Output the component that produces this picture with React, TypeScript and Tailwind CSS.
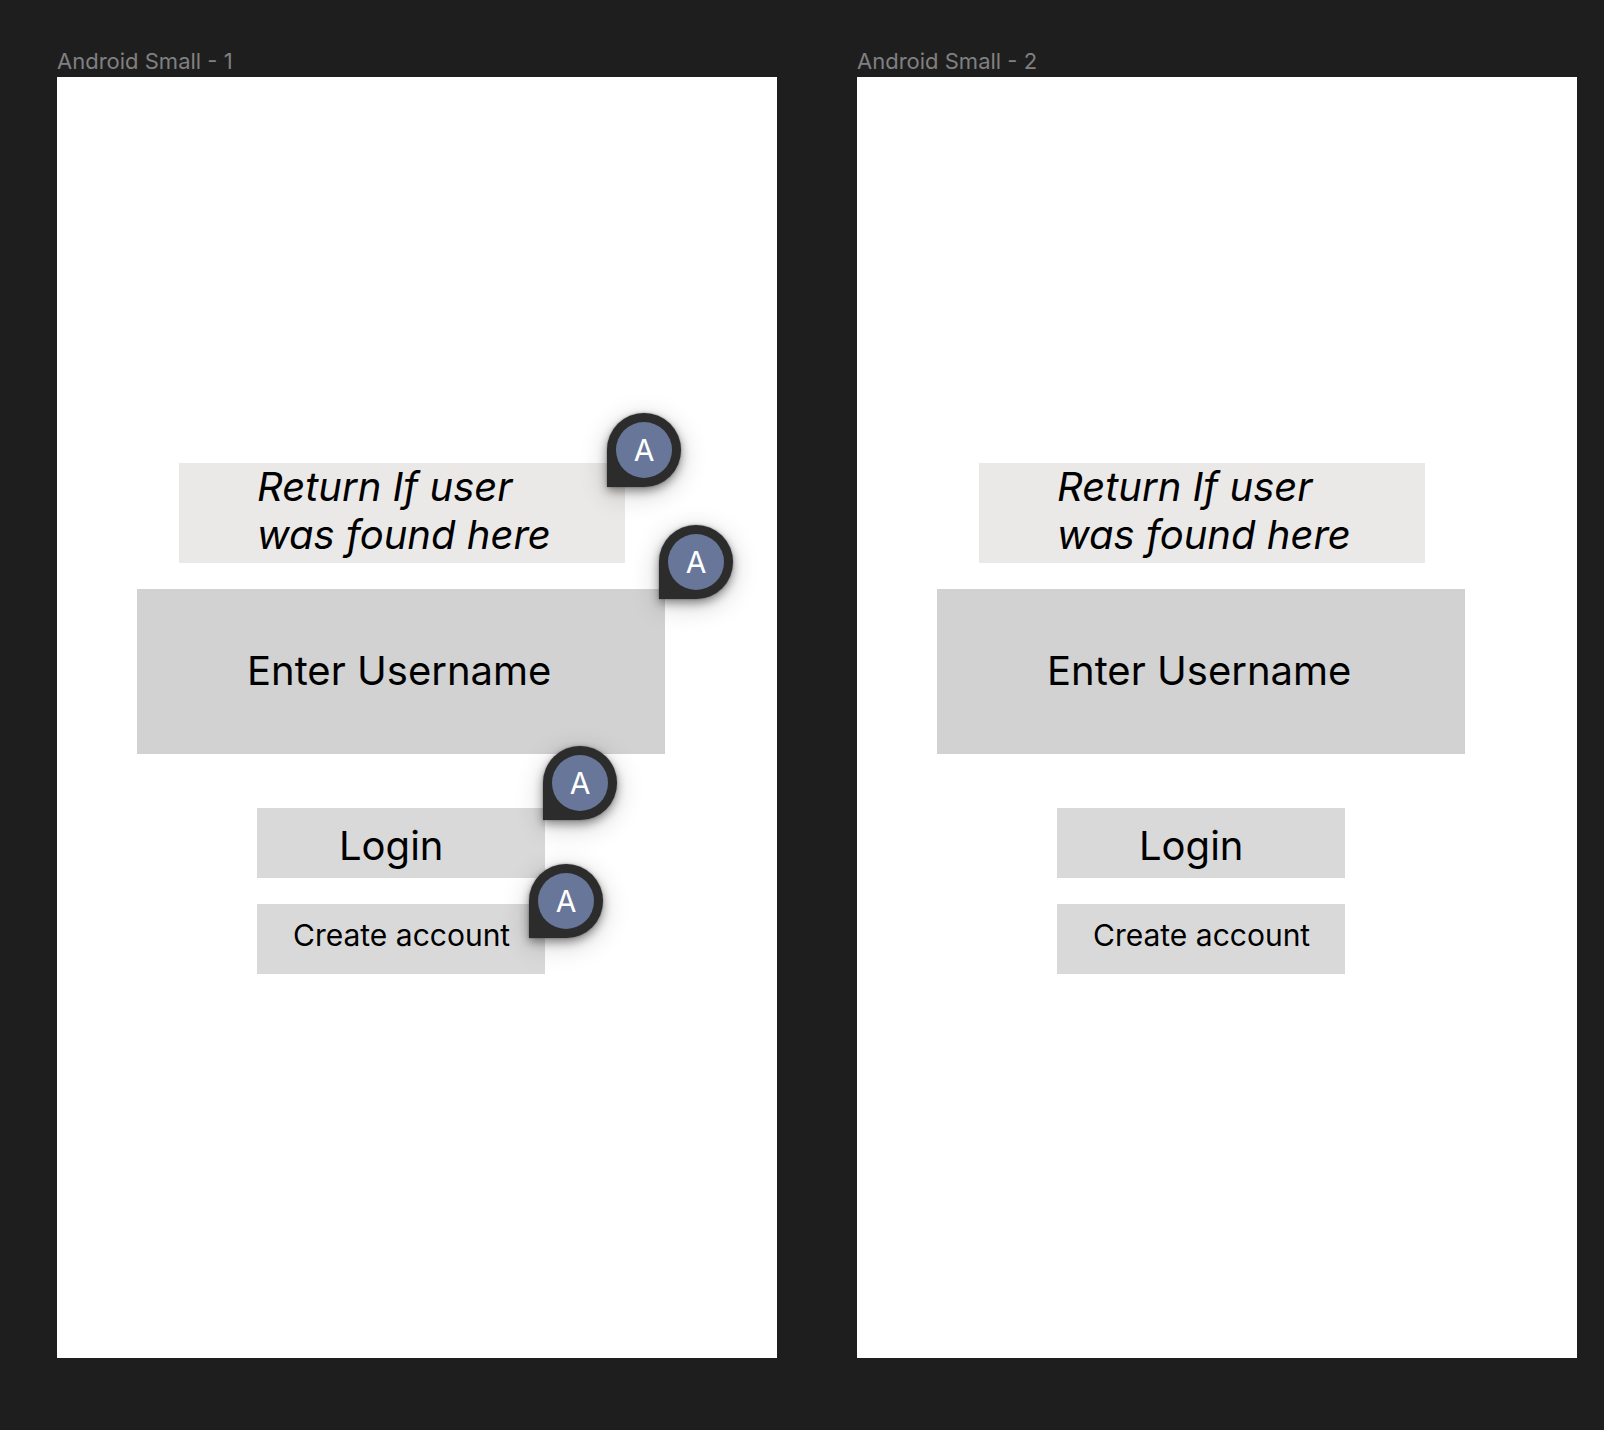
type PinProps = { label: string; place: string };

function CommentPin({ label, place }: PinProps) {
  return (
    <button
      type="button"
      aria-label={label}
      className={`absolute z-10 flex size-[74px] items-center justify-center rounded-full rounded-bl-none bg-[#2c2c2c] shadow-[0_0_2px_rgba(0,0,0,0.4),0_4px_10px_rgba(0,0,0,0.4),0_6px_28px_rgba(0,0,0,0.2)] ${place}`}
    >
      <span className="flex size-14 items-center justify-center rounded-full bg-[#687799] text-[30px] leading-9 text-white">
        A
      </span>
    </button>
  );
}

function Frame({ number, commented }: { number: number; commented: boolean }) {
  return (
    <section className="min-w-0 flex-1">
      <h2 className="mb-1 text-[22px] leading-6 text-[#808080]">Android Small - {number}</h2>
      <div className="flex justify-center bg-white pt-[386px] pr-8 pb-96 text-black">
        <form className="flex w-full max-w-[528px] flex-col items-center" onSubmit={(e) => e.preventDefault()}>
          <div className="relative mr-10 h-[100px] w-full max-w-[446px] self-end bg-[#eae9e7] pl-[78px]">
            <p className="text-[40px] leading-[48px] italic">
              Return If user
              <br />
              was found here
            </p>
            {commented && <CommentPin label="Comment on the result" place="-top-[50px] -right-14" />}
          </div>

          <div className="relative mt-[26px] w-full">
            <input
              type="text"
              aria-label="Enter Username"
              placeholder="Enter Username"
              className="block h-[165px] w-full bg-[#d2d2d2] pb-0.5 pl-[110px] text-[40px] leading-[48px] outline-none placeholder:text-black placeholder:opacity-100"
            />
            {commented && <CommentPin label="Comment on the username field" place="-top-16 -right-17" />}
          </div>

          <div className="relative mt-[54px] w-full max-w-72">
            <button
              type="submit"
              className="block h-[70px] w-full bg-[#d9d9d9] pt-1.5 pl-[82px] text-left text-[40px] leading-[48px]"
            >
              Login
            </button>
            {commented && <CommentPin label="Comment on the login button" place="-top-[62px] -right-18" />}
          </div>

          <div className="relative mt-[26px] w-full max-w-72">
            <button
              type="button"
              className="block h-[70px] w-full bg-[#d9d9d9] pb-2 pl-9 text-left text-[30px] leading-9 whitespace-nowrap"
            >
              Create account
            </button>
            {commented && <CommentPin label="Comment on the create account button" place="-top-10 -right-[58px]" />}
          </div>
        </form>
      </div>
    </section>
  );
}

export default function App() {
  return (
    <main className="flex min-h-screen gap-20 bg-[#1e1e1e] pt-[49px] pr-[27px] pb-12 pl-[57px] font-['Inter',sans-serif]">
      <Frame number={1} commented />
      <Frame number={2} commented={false} />
    </main>
  );
}
